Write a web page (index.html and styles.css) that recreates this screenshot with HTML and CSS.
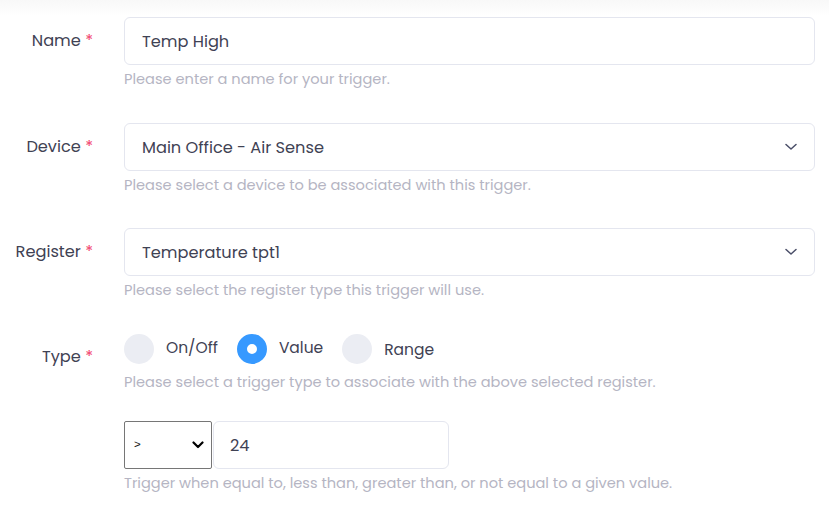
FILE: index.html
```html
<!DOCTYPE html>
<html>
<head>
<meta charset="utf-8">
<link rel="stylesheet" href="styles.css">
</head>
<body>
<div class="topshade"></div>
<form class="form">
  <div class="row">
    <label class="label">Name <span class="req">*</span></label>
    <div class="field">
      <div class="input">Temp High</div>
      <div class="help">Please enter a name for your trigger.</div>
    </div>
  </div>
  <div class="row">
    <label class="label">Device <span class="req">*</span></label>
    <div class="field">
      <div class="input select">Main Office - Air Sense
        <svg class="chev" width="12" height="8" viewBox="0 0 12 8"><path d="M1 1.5 L6 6 L11 1.5" fill="none" stroke="#4a4e68" stroke-width="1.5" stroke-linecap="round" stroke-linejoin="round"/></svg>
      </div>
      <div class="help">Please select a device to be associated with this trigger.</div>
    </div>
  </div>
  <div class="row">
    <label class="label">Register <span class="req">*</span></label>
    <div class="field">
      <div class="input select">Temperature tpt1
        <svg class="chev" width="12" height="8" viewBox="0 0 12 8"><path d="M1 1.5 L6 6 L11 1.5" fill="none" stroke="#4a4e68" stroke-width="1.5" stroke-linecap="round" stroke-linejoin="round"/></svg>
      </div>
      <div class="help">Please select the register type this trigger will use.</div>
    </div>
  </div>
  <div class="row type-row">
    <label class="label type-label">Type <span class="req">*</span></label>
    <div class="field">
      <div class="radios">
        <span class="radio"><span class="dot"></span><span class="rlabel">On/Off</span></span>
        <span class="radio"><span class="dot checked"></span><span class="rlabel">Value</span></span>
        <span class="radio"><span class="dot"></span><span class="rlabel low">Range</span></span>
      </div>
      <div class="help help-type">Please select a trigger type to associate with the above selected register.</div>
    </div>
  </div>
  <div class="row value-row">
    <div class="label"></div>
    <div class="field">
      <div class="pair">
        <div class="opsel"><span class="op">&gt;</span>
          <svg width="12" height="8" viewBox="0 0 12 8"><path d="M1.5 1.5 L6 6 L10.5 1.5" fill="none" stroke="#000" stroke-width="2.2" stroke-linecap="round" stroke-linejoin="round"/></svg>
        </div>
        <div class="input num">24</div>
      </div>
      <div class="help">Trigger when equal to, less than, greater than, or not equal to a given value.</div>
    </div>
  </div>
</form>
</body>
</html>
```
FILE: styles.css
```css
html, body {
  margin: 0;
  padding: 0;
  background: #ffffff;
}
body {
  font-family: "Poppins", "Open Sans", "Liberation Sans", sans-serif;
  color: #3f4254;
  position: relative;
  width: 829px;
  height: 506px;
  overflow: hidden;
}
.topshade {
  position: absolute;
  left: 0;
  top: 0;
  right: 0;
  height: 16px;
  background: linear-gradient(#f8f8f8, #ffffff);
}
.form {
  position: relative;
  padding: 17px 14px 0 0;
  display: flex;
  flex-direction: column;
}
.row {
  display: grid;
  grid-template-columns: 93px 1fr;
  column-gap: 31px;
  margin-bottom: 33px;
}
.row:nth-child(2) { margin-bottom: 32px; }
.label {
  text-align: right;
  font-size: 16.2px;
  line-height: 48px;
  height: 48px;
  color: #3f4254;
  white-space: nowrap;
}
.req {
  color: #f1416c;
}
.input {
  box-sizing: border-box;
  height: 48px;
  border: 1px solid #e4e6ef;
  border-radius: 6px;
  padding: 1px 17px 0;
  font-size: 16.2px;
  line-height: 46px;
  color: #3f4254;
  position: relative;
}
.select .chev {
  position: absolute;
  right: 17px;
  top: 19px;
}
.help {
  margin-top: 4px;
  font-size: 14.6px;
  line-height: 21px;
  color: #b5b5c3;
  white-space: nowrap;
}
.type-row {
  margin-bottom: 28px;
}
.type-label {
  line-height: 20px;
  height: 20px;
  padding-top: 13px;
}
.radios {
  display: flex;
  align-items: center;
  height: 30px;
}
.radio {
  display: flex;
  align-items: center;
  margin-right: 19px;
}
.dot {
  width: 30px;
  height: 30px;
  border-radius: 50%;
  background: #ebedf3;
  margin-right: 12px;
  box-sizing: border-box;
}
.dot.checked {
  border: 10px solid #3699ff;
  background: #ffffff;
}
.rlabel {
  font-size: 15.5px;
  line-height: 20px;
  margin-top: -2px;
}
.rlabel.low {
  margin-top: 2px;
}
.help-type {
  margin-top: 8px;
}
.pair {
  display: flex;
  gap: 1px;
}
.opsel {
  box-sizing: border-box;
  width: 88px;
  height: 48px;
  border: 1px solid #767676;
  border-radius: 2px;
  display: flex;
  align-items: center;
  justify-content: space-between;
  padding: 0 7px 0 9px;
  font-family: "Liberation Sans", Arial, sans-serif;
  font-size: 11.5px;
  color: #111;
}
.op {
  margin-top: -3px;
}
.num {
  width: 236px;
  padding: 1px 16px 0;
}
```
